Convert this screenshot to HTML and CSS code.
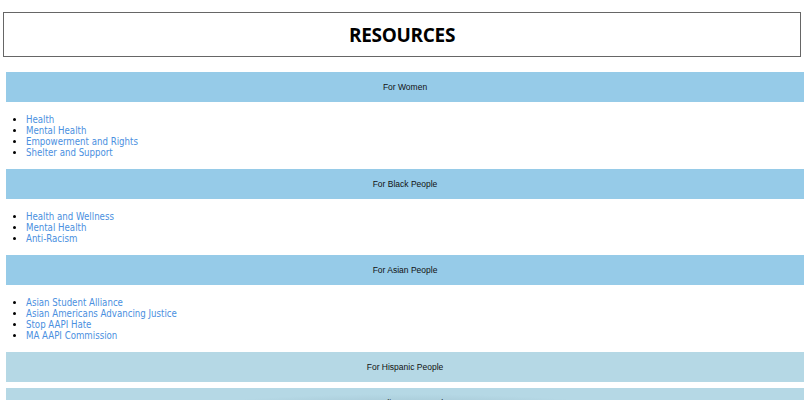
FILE: index.html
```html
<!doctype html>
<html lang="en">
<head>
  <meta charset="utf-8">
  <title>Resources</title>
  <link rel="stylesheet" href="styles.css">
</head>
<body>
  <h1 class="page-title">RESOURCES</h1>
  <div class="accordion">
    <button class="collapsible active">For Women</button>
    <div class="panel">
      <ul>
        <li><a href="#">Health</a></li>
        <li><a href="#">Mental Health</a></li>
        <li><a href="#">Empowerment and Rights</a></li>
        <li><a href="#">Shelter and Support</a></li>
      </ul>
    </div>
    <button class="collapsible active">For Black People</button>
    <div class="panel">
      <ul>
        <li><a href="#">Health and Wellness</a></li>
        <li><a href="#">Mental Health</a></li>
        <li><a href="#">Anti-Racism</a></li>
      </ul>
    </div>
    <button class="collapsible active">For Asian People</button>
    <div class="panel">
      <ul>
        <li><a href="#">Asian Student Alliance</a></li>
        <li><a href="#">Asian Americans Advancing Justice</a></li>
        <li><a href="#">Stop AAPI Hate</a></li>
        <li><a href="#">MA AAPI Commission</a></li>
      </ul>
    </div>
    <button class="collapsible">For Hispanic People</button>
    <button class="collapsible hover">For Indigenous People</button>
  </div>
</body>
</html>
```
FILE: styles.css
```css
body {
  margin: 0;
  padding: 12px 0 0;
  font-family: 'Liberation Sans', Arial, sans-serif;
  background: #fff;
  color: #000;
}
.page-title {
  box-sizing: border-box;
  width: 798px;
  height: 45px;
  margin: 0 0 15px 3px;
  border: 1px solid #666;
  display: flex;
  align-items: center;
  justify-content: center;
  font-family: 'Open Sans', sans-serif;
  font-size: 19px;
  font-weight: 700;
  letter-spacing: -0.3px;
}
.accordion {
  display: flex;
  flex-direction: column;
  gap: 6px;
  width: 798px;
  margin-left: 6px;
}
.collapsible {
  display: block;
  width: 100%;
  height: 30px;
  padding: 0;
  border: none;
  background: #b5d8e5;
  color: #111;
  font-family: 'Liberation Sans', Arial, sans-serif;
  font-size: 8.5px;
  text-align: center;
  cursor: pointer;
}
.collapsible.active {
  background: #96cbe8;
}
.collapsible.hover {
  background: radial-gradient(ellipse 260px 24px at 50% 100%, rgba(120,150,165,0.55), rgba(181,216,229,0) 100%), #b5d8e5;
}
.panel {
  padding: 6px 0 5px;
}
.panel ul {
  margin: 0;
  padding-left: 20px;
  font-family: 'DejaVu Sans Condensed', 'DejaVu Sans', sans-serif;
  font-size: 9.6px;
  line-height: 11px;
}
.panel a {
  color: #4a8fe0;
  text-decoration: none;
}
```
